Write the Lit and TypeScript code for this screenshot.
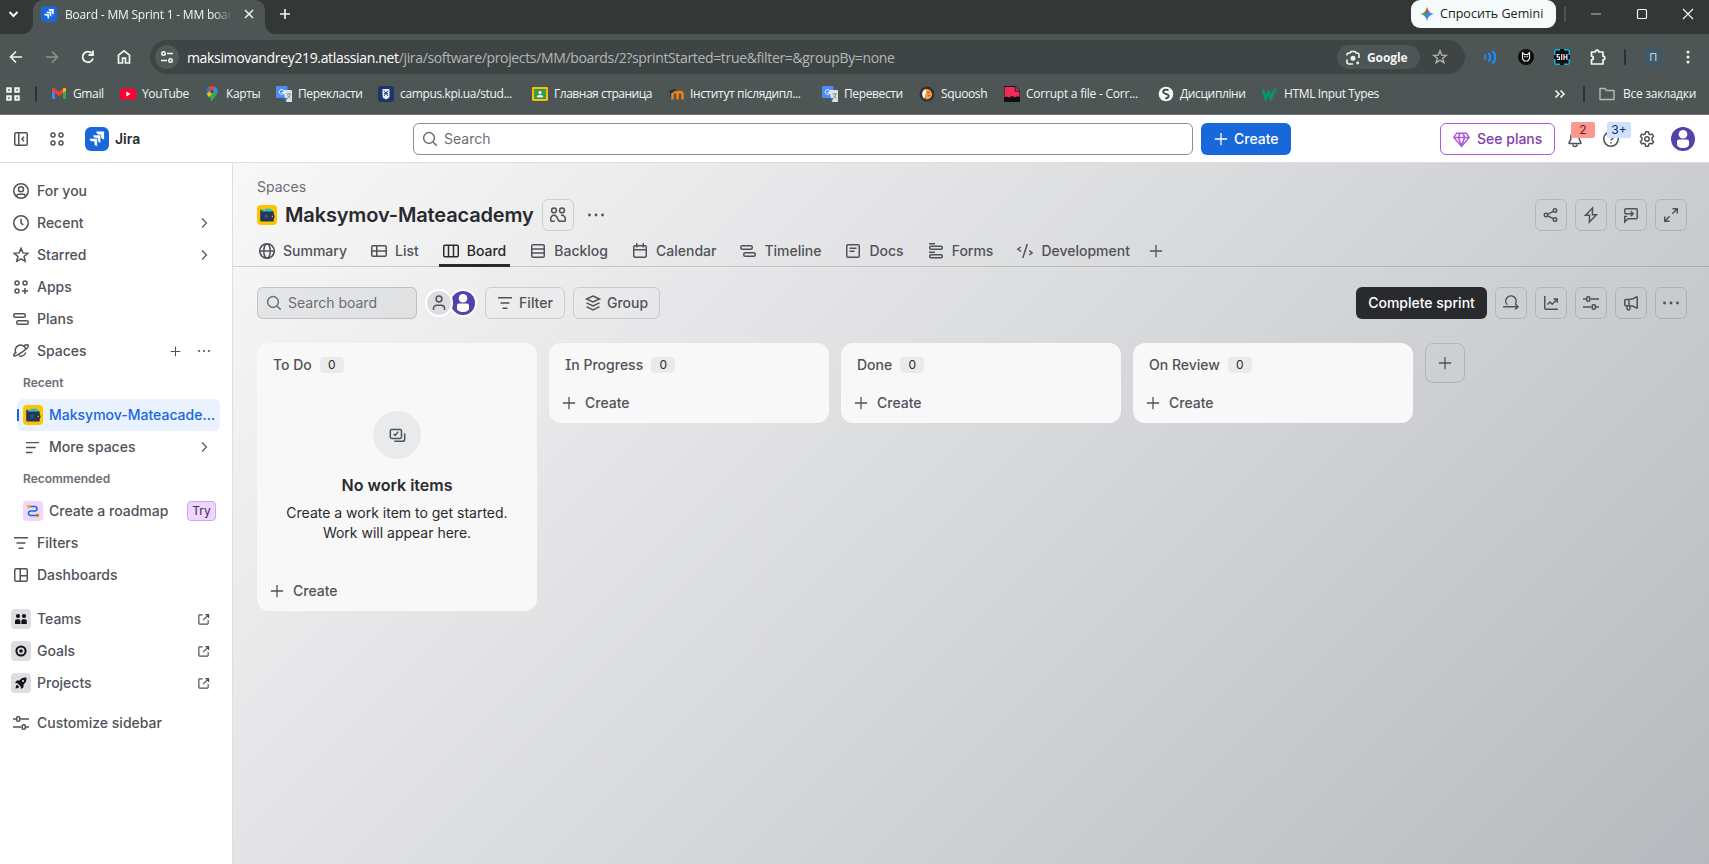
import { LitElement, html, css, svg, nothing } from "lit";
import type { TemplateResult, SVGTemplateResult } from "lit";
import { customElement } from "lit/decorators.js";
import { classMap } from "lit/directives/class-map.js";

/** Line icons on a 16 unit grid, 1.5 unit strokes in the current colour. */
const lines: Record<string, SVGTemplateResult> = {
  panel: svg`<rect x="1.75" y="1.75" width="12.5" height="12.5" rx="1.25"/><path d="M5.75 2v12M11 5.8 9 8l2 2.2"/>`,
  grid: svg`<circle cx="4" cy="4" r="2"/><circle cx="12" cy="4" r="2"/><circle cx="4" cy="12" r="2"/><circle cx="12" cy="12" r="2"/>`,
  search: svg`<circle cx="7" cy="7" r="5.4"/><path d="m11 11 3.8 3.8"/>`,
  plus: svg`<path d="M8 1v14M1 8h14"/>`,
  person: svg`<circle cx="8" cy="8" r="7.25"/><circle cx="8" cy="6.2" r="2.5"/><path d="M3.8 13.6v-.4a2 2 0 0 1 2-2h4.4a2 2 0 0 1 2 2v.4"/>`,
  clock: svg`<circle cx="8" cy="8" r="7.25"/><path d="M8 3.8V8l2.2 1.9"/>`,
  star: svg`<path d="m8 1.4 1.9 4.5 4.9.4-3.7 3.2 1.1 4.8L8 11.8l-4.2 2.5 1.1-4.8L1.2 6.3l4.9-.4z"/>`,
  apps: svg`<circle cx="4" cy="4" r="2"/><circle cx="12" cy="4" r="2"/><circle cx="4" cy="12" r="2"/><path d="M12 9v6M9 12h6"/>`,
  plans: svg`<rect x=".75" y="2.75" width="11.5" height="3.5" rx="1.5"/><rect x="3.75" y="9.75" width="11.5" height="3.5" rx="1.5"/>`,
  planet: svg`<path d="M3 10.3A5.4 5.4 0 1 1 12.8 6M12.7 9.6A5.4 5.4 0 0 1 6 12.9"/><path d="M10.7 2.7c2.3-1 4.1-1.2 4.5-.5.7 1.2-2.1 4.300-6.100 7S1.400 13.700.8 12.700c-.4-.7.7-2.200 2.400-3.800"/>`,
  more: svg`<path d="M1 2.750h14M1 8h10.500M1 13.250h7"/>`,
  filter: svg`<path d="M1 2.750h14M3.500 8h9M5.500 13.250h5"/>`,
  dashboard: svg`<rect x="1.750" y="1.750" width="12.500" height="12.500" rx="1.250"/><path d="M7.250 2v12M7.500 8.750h6.500"/>`,
  external: svg`<path d="M7 2.250H3.250a1 1 0 0 0-1 1v9.500a1 1 0 0 0 1 1h9.500a1 1 0 0 0 1-1V9M10 2h4.250v4.250M14 2.250 7.500 8.750"/>`,
  sliders: svg`<path d="M0 4h3M7.500 4H16M0 12h8.500M13 12h3"/><rect x="3.750" y="1.750" width="3" height="4.500" rx="1"/><rect x="9.250" y="9.750" width="3" height="4.500" rx="1"/>`,
  chevron: svg`<path d="m6 3.500 4.500 4.500L6 12.500" stroke-width="1.200"/>`,
  people: svg`<circle cx="4" cy="3.400" r="2.400"/><circle cx="12" cy="3.400" r="2.400"/><path d="M.75 14.250V11.500A3.250 3.250 0 0 1 4 8.250c2 0 2.900 1.200 3.500 3.200.5 1.800 1.500 2.800 3.300 2.800h3.700a.75.75 0 0 0 .75-.75v-2A3.250 3.250 0 0 0 12 8.250h-1M.75 14.250h4"/>`,
  globe: svg`<circle cx="8" cy="8" r="7.250"/><ellipse cx="8" cy="8" rx="3.200" ry="7.250"/><path d="M.75 8h14.500"/>`,
  list: svg`<rect x=".75" y="2.750" width="14.500" height="10.500" rx="1.250"/><path d="M5.750 3v10M1 8h14"/>`,
  board: svg`<rect x=".75" y="2.250" width="14.500" height="11.500" rx="1.250"/><path d="M5.500 2.500v11M10.500 2.500v11"/>`,
  backlog: svg`<rect x="1.750" y="1.750" width="12.500" height="12.500" rx="1.250"/><path d="M2 6h12M2 10h12"/>`,
  calendar: svg`<rect x="1.750" y="2.750" width="12.500" height="11.500" rx="1.250"/><path d="M2 6.750h12M4.750 0v4.500M11.250 0v4.500"/>`,
  docs: svg`<rect x="1.750" y="1.750" width="12.500" height="12.500" rx="1.250"/><path d="M4.500 5.250h7M4.500 8.250h5"/>`,
  forms: svg`<path d="M1 .75h6M1 9.250h6"/><rect x="1.750" y="3.250" width="12.500" height="3" rx="1.200"/><rect x="1.750" y="11.750" width="12.500" height="3" rx="1.200"/>`,
  code: svg`<path d="M10.300 1 5.800 15M3.800 4 .9 6l3 2.500M12.300 7.500l2.800 2.500-2.900 2"/>`,
  share: svg`<circle cx="3" cy="8" r="1.750"/><circle cx="12" cy="3.500" r="1.750"/><circle cx="12" cy="12.500" r="1.750"/><path d="m4.600 7.200 5.800-2.900M4.600 8.800l5.800 2.900"/>`,
  bolt: svg`<path d="M9.500.9 2.500 8.200h4L6.400 15.100l7-7.300h-4z"/>`,
  feedback: svg`<path d="M1.750 6.500V3a1.250 1.250 0 0 1 1.250-1.250h10A1.250 1.250 0 0 1 14.250 3v7.500a1.250 1.250 0 0 1-1.250 1.250H5L1.750 15V9.500H4M1.750 6.750h8.500M7.700 4.250 10.200 6.750 7.700 9.250"/>`,
  expand: svg`<path d="M9.500 1.750h4.750V6.500M14 2 9.300 6.700M6.500 14.250H1.750V9.500M2 14l4.700-4.700"/>`,
  sprint: svg`<path d="M4.300 9.800A5.200 5.200 0 1 1 12.400 8.800M0 11.750h15M12.200 9l2.800 2.750L12.200 14.500"/>`,
  chart: svg`<path d="M1.750 1v12a1.250 1.250 0 0 0 1.250 1.250h12M4.500 9.500 7 7l2.200 2.200L13.800 4.500M10.500 4h3.750v3.750"/>`,
  megaphone: svg`<path d="M1.750 5.500a1 1 0 0 1 1-1h3.500c2.500 0 5.200-1 7-2.300a.5.500 0 0 1 1 .4v9.800a.5.500 0 0 1-1 .4c-1.800-1.300-4.500-2-7-2H2.750a1 1 0 0 1-1-1zM6 4.500v6M4 11v2.500a1.250 1.250 0 0 0 3 0V11"/>`,
  layers: svg`<path d="m8 1 6.500 3L8 7 1.500 4zM1.500 7.800 8 11l6.500-3.200M1.500 11.600 8 14.800l6.500-3.200"/>`,
  user: svg`<circle cx="8" cy="4" r="2.900"/><path d="M2.500 15v-1.500A3.250 3.250 0 0 1 5.750 10.250h4.500A3.250 3.250 0 0 1 13.500 13.500V15"/>`,
  bell: svg`<path d="M6 13.500a2 2 0 0 0 4 0M8 1.500c-2.500 0-4.200 1.900-4.200 4.300v2.400L2 11.700a.5.500 0 0 0 .4.700h11.200a.5.500 0 0 0 .4-.7l-1.800-3.500V5.800C12.200 3.400 10.500 1.500 8 1.500z"/>`,
  help: svg`<circle cx="8" cy="8" r="7.250"/><path d="M6 6.300a2 2 0 1 1 2.900 1.800c-.6.300-.9.700-.9 1.400M8 11v1.500"/>`,
  gear: svg`<path d="M6.700.8h2.600l.6 2.200 1.300.7 2.100-.6 1.300 2.200L13 7v2l1.600 1.700-1.300 2.200-2.100-.6-1.300.7-.6 2.200H6.700L6.100 13l-1.300-.7-2.100.6-1.300-2.200L3 9V7L1.400 5.300l1.300-2.200 2.100.6L6.100 3z" stroke-linejoin="round"/><circle cx="8" cy="8" r="2.200"/>`,
  gem: svg`<path d="M3.500 2h9L15.200 6 8 14.500.8 6zM1 6h14M5 6l3 8 3-8M5 6l1.700-4M11 6 9.300 2"/>`,
  work: svg`<rect x="1.250" y="2.250" width="10.500" height="8.500" rx="1.250"/><path d="m4.300 6.600 1.400 1.400 2.900-3.500M14.750 6v5.500a2 2 0 0 1-2 2H5"/>`,
};

const icon = (name: string, size = 16, extra = "") => html`<svg class="icon ${extra}" width=${size} height=${size}
  viewBox="0 0 16 16" fill="none" stroke="currentColor" stroke-width=${(1.5 * 16) / Math.max(size, 16)}>${lines[name]}</svg>`;

const dots = (size = 16) => html`<svg class="icon" width=${size} height=${size} viewBox="0 0 16 16" fill="currentColor">
  <circle cx="1.500" cy="8" r="1.400"/><circle cx="8" cy="8" r="1.400"/><circle cx="14.500" cy="8" r="1.400"/></svg>`;

const jiraMark = (size: number) => html`<svg class="icon" width=${size} height=${size} viewBox="0 0 24 24">
  <rect width="24" height="24" rx="6" fill="#1868db"/>
  <g fill="#fff"><path d="M11.300 4.600h7.800v7.800c-1.900 0-3.100-1.300-3.100-3.100V7.700h-1.600c-1.800 0-3.100-1.200-3.100-3.100z"/>
  <path d="M7.900 8.100h7.800v7.800c-1.900 0-3.100-1.300-3.100-3.100v-1.600H11c-1.800 0-3.100-1.200-3.100-3.100z" stroke="#1868db" stroke-width=".5"/>
  <path d="M4.500 11.500h7.800v7.800c-1.900 0-3.100-1.300-3.100-3.100v-1.600H7.600c-1.800 0-3.100-1.200-3.100-3.100z" stroke="#1868db" stroke-width=".5"/></g></svg>`;

const wallet = html`<svg class="icon" width="20" height="20" viewBox="0 0 20 20">
  <rect width="20" height="20" rx="4" fill="#ffc400"/>
  <path d="M4.500 6.500 5.500 4.500l2 .5L9 3.200l1.800 1 1.700-1 1.800 1.500 1.200.3.500 2z" fill="#00b8d9"/><path d="m6 6 2.500-1 2 .8 2.500-1 2 1.200z" fill="#57d9a3"/>
  <path d="M3.200 5.800c0-.8.500-1.200 1.200-1.200L5 6.500h10.800c.6 0 1 .4 1 1v8c0 .6-.4 1-1 1H4.600c-.8 0-1.400-.5-1.400-1.300z" fill="#253858"/>
  <circle cx="9.200" cy="11.500" r="2.100" fill="#2e5187"/><rect x="13.600" y="9.800" width="4" height="3.300" rx="1.500" fill="#172b4d"/><circle cx="15.300" cy="11.400" r=".8" fill="#ffc400"/></svg>`;

const avatar = html`<svg class="icon" width="24" height="24" viewBox="0 0 24 24"><circle cx="12" cy="12" r="12" fill="#5243aa"/>
  <circle cx="12" cy="7.300" r="4.300" fill="#fff"/><path d="M6 14.800c0-1.300.9-2.200 2.200-2.200h7.600c1.300 0 2.200.9 2.200 2.200v3c0 1.700-2.700 3.200-6 3.200s-6-1.500-6-3.200z" fill="#fff"/></svg>`;

const base = css`
  :host, * { box-sizing: border-box; }
  .icon { display: block; flex: none; overflow: visible; }
  .row { display: flex; align-items: center; }
  .grow { flex: 1; }
`;

/* ---------- Browser window frame ---------- */

const translate = svg`<rect width="11.500" height="12" rx="1.200" fill="#4e8df5"/><path d="M7 4h8a1 1 0 0 1 1 1v10.500a.5.500 0 0 1-.5.500H10z" fill="#dfe1e5"/><path d="m7.500 12 2.500 4 1-4z" fill="#3367d6"/>
  <path d="M7.600 4.500A2.400 2.400 0 1 0 8 6.500H5.700" fill="none" stroke="#fff" stroke-width="1"/><path d="M10.500 8h4.500M12.800 7v1M14 8c-.4 2-1.500 3.500-3 4.500M11.700 9.500l2.800 3" stroke="#6b7f8c" stroke-width=".8" fill="none"/>`;

const bookmarks: { label: string; glyph: SVGTemplateResult }[] = [
  { label: "Gmail", glyph: svg`<path d="M1 3.500v9.500h3V7z" fill="#4285f4"/><path d="M12 7v6h3V3.500z" fill="#34a853"/><path d="M1 3.200C1 2 2.500 1.500 3.500 2.300L8 5.800l4.500-3.500c1-.8 2.500-.3 2.500.9v1.600L8 10 1 4.800z" fill="#ea4335"/><path d="m12 2.700.5-.4c1-.8 2.500-.3 2.500.9v1.600L12 7z" fill="#fbbc04"/>` },
  { label: "YouTube", glyph: svg`<rect x="0" y="2.500" width="16" height="11" rx="2.800" fill="#ff0033"/><path d="m6.300 5.500 4.300 2.500-4.300 2.500z" fill="#fff"/>` },
  { label: "Карты", glyph: svg`<path d="M8 0a5.600 5.600 0 0 0-5.600 5.600C2.400 9.700 6.700 11 8 16c1.300-5 5.600-6.300 5.600-10.400A5.600 5.600 0 0 0 8 0z" fill="#34a853"/><path d="M8 0a5.600 5.600 0 0 0-4.300 2L8 5.600 11 .9A5.600 5.600 0 0 0 8 0z" fill="#ea4335"/><path d="m11 .9-4 5.700 3.500 1L13.600 5.600A5.600 5.600 0 0 0 11 .9z" fill="#4285f4"/><path d="M3.700 2a5.600 5.600 0 0 0-.8 6L7.500 5z" fill="#1a73e8"/><path d="m2.900 8 3.600-4L8.700 7.500 4.700 11C4 10 3.300 9 2.900 8z" fill="#fbbc04"/><circle cx="8" cy="5.500" r="2" fill="#4d5654"/>` },
  { label: "Перекласти", glyph: translate },
  { label: "campus.kpi.ua/stud...", glyph: svg`<rect width="16" height="16" rx="3" fill="#1c356b"/><path d="M4.500 3h7v7.500c0 1.500-2 2-3.500 3-1.500-1-3.500-1.500-3.500-3z" fill="#e8ecf4"/><path d="M6 4.500 10 10M10 4.500 6 10M6 7.300h4" stroke="#1c356b" stroke-width=".9"/>` },
  { label: "Главная страница", glyph: svg`<rect y="1" width="16" height="14" rx="1.300" fill="#fbbc04"/><rect x="2" y="3" width="12" height="10" fill="#3a9a52"/><circle cx="8" cy="6.500" r="1.600" fill="#fff"/><path d="M4.800 11.200c0-1.500 1.500-2.200 3.200-2.200s3.200.7 3.200 2.200z" fill="#fff"/>` },
  { label: "Інститут післядипл...", glyph: svg`<path d="M4.500 13.500V8.500a2.500 2.500 0 0 1 5 0v5M9.500 8.500a2.500 2.500 0 0 1 5 0v5" fill="none" stroke="#f98012" stroke-width="2.400"/><path d="M0 5.500 6 3l3 1-5 3-1 .2V11l-1 0V6.200z" fill="#333"/>` },
  { label: "Перевести", glyph: translate },
  { label: "Squoosh", glyph: svg`<circle cx="8" cy="8" r="7.500" fill="#33302f"/><path d="M5 3.500C8 2 12.500 4 13 8s-4 6-7 5C8 11 4.500 10 5 8z" fill="#f8a34a"/><path d="M4.500 4.500C7 3 8 6 6.500 7.500S7.500 11 5 12.500C3 11 2.500 6 4.500 4.500z" fill="#fff"/><path d="M8 6.500h3M8.500 9.500h3" stroke="#e05a1a" stroke-width="1.300"/>` },
  { label: "Corrupt a file - Corr...", glyph: svg`<path d="M0 1a1 1 0 0 1 1-1h10l5 5v11H0z" fill="#111"/><path d="M.5 1h10.300v4.500h4.700V11l-2-.8-2.500 1-3-1.200-3 1.400-2.500-.8-2 .7z" fill="#ec2d5a"/><path d="m11.500 1.200 3.700 3.600h-3.700z" fill="#ec2d5a"/>` },
  { label: "Дисципліни", glyph: svg`<circle cx="8" cy="8" r="7.300" fill="#f5f5f5"/><path d="M10.500 4.300C8 2.800 4.800 4 5.300 6.300c.5 1.800 4.700 1.200 5.300 3.200.5 1.800-1.300 2.800-3.300 2.800" fill="none" stroke="#3a3f3e" stroke-width="1.800"/>` },
  { label: "HTML Input Types", glyph: svg`<path d="m.8 4 3 8.500L6.500 6.500l2.500 6 3.200-8.500" fill="none" stroke="#04996b" stroke-width="2.600"/><path d="M12.500 2.500h2.300l-1.200 1.600c1.800 0 1.500 2.400-.8 2" fill="none" stroke="#04996b" stroke-width=".9"/>` },
];

@customElement("browser-frame")
class BrowserFrame extends LitElement {
  static styles = [base, css`
    :host { display: block; flex: none; background: #4d5654; color: #f3f5f4; font: 12px/16px "Open Sans", "Noto Sans", sans-serif; height: 115px; border-bottom: 1px solid #6e7674; letter-spacing: -0.37px; white-space: nowrap; }
    .strip { height: 34px; background: #333837; display: flex; padding-right: 13px; }
    .menu { width: 33px; padding: 7px 0 0 6px; }
    .tab { width: 232px; background: #4d5654; border-radius: 10px 10px 0 0; padding: 0 8px 7px 8px; gap: 8px; position: relative; }
    .tab::before, .tab::after { content: ""; position: absolute; bottom: 0; width: 10px; height: 10px; }
    .tab::before { left: -10px; background: radial-gradient(circle at 0 0, transparent 9.500px, #4d5654 10px); }
    .tab::after { right: -10px; background: radial-gradient(circle at 100% 0, transparent 9.500px, #4d5654 10px); }
    .name { flex: 1; overflow: hidden; padding-top: 2px; letter-spacing: -0.2px; -webkit-mask-image: linear-gradient(90deg, #000 88%, transparent); mask-image: linear-gradient(90deg, #000 88%, transparent); }
    .new { padding: 7px 0 0 13px; }
    .gemini { width: 145px; height: 28px; border-radius: 9px; background: #f5fbfa; color: #1d2221; gap: 6px; padding: 0 0 1px 9px; font-size: 12.500px; letter-spacing: 0.03px; }
    .sep { width: 2px; height: 16px; background: #2d3332; border-radius: 1px; }
    .strip .sep { background: #4d5654; margin: 6px 22px 0 8px; }
    .wins { gap: 30px; height: 28px; }
    .bar { height: 46px; }
    .nav { width: 150px; padding-left: 8px; gap: 20px; }
    .dim { color: #8c9492; }
    .omni { width: 1315px; height: 34px; border-radius: 17px; background: #3f4545; padding: 0 17px 0 5px; }
    .site { width: 24px; height: 24px; border-radius: 12px; background: #525a58; justify-content: center; margin-right: 8px; }
    .url { font-size: 14px; letter-spacing: -0.345px; color: #b3b8b7; padding-top: 1px; }
    .url b { font-weight: 400; color: #fff; }
    .lens { width: 83px; height: 24px; border-radius: 12px; background: #4d5654; gap: 6px; padding: 1px 0 0 8px; margin-right: 12px; font-weight: 700; letter-spacing: -0.1px; }
    .ext { padding-left: 17px; gap: 20px; }
    .ext .sep { margin: 0 -3px 0 -2px; }
    .who { width: 20px; height: 20px; border-radius: 10px; background: #3f5868; color: #d5e3ee; justify-content: center; font-size: 11px; margin-right: -3px; }
    .marks { height: 34px; margin-top: -3px; }
    .items { display: grid; grid-template-columns: 69px 84px 72px 102px 154px 136px 154px 97px 85px 154px 104px 120px; }
    .marks .apps { width: 35px; padding-left: 6px; }
    .mark { gap: 6px; }
    .mark:nth-child(6) { letter-spacing: -0.47px; }
    .mark:nth-child(10) { letter-spacing: -0.23px; }
    .marks .sep { margin-right: 14px; }
    .all { gap: 8px; padding-right: 13px; letter-spacing: -0.28px; }
    .folder { color: #b4bab8; }
    .over { margin-right: 15px; }
  `];

  render() {
    const ln = (body: SVGTemplateResult, w = 1.600, cls = "") => html`<svg class="icon ${cls}" width="16" height="16" viewBox="0 0 16 16" fill="none" stroke="currentColor" stroke-width=${w}>${body}</svg>`;
    return html`
      <div class="strip">
        <div class="menu">${ln(svg`<path d="m3.500 5 4 4 4-4"/>`, 2)}</div>
        <div class="tab row">${jiraMark(16)}<span class="name">Board - MM Sprint 1 - MM board</span>${ln(svg`<path d="m4 4 8 8M12 4l-8 8"/>`, 1.500)}</div>
        <div class="new">${ln(svg`<path d="M7 2v10M2 7h10"/>`, 1.600)}</div>
        <span class="grow"></span>
        <div class="gemini row"><svg class="icon" width="14" height="14" viewBox="0 0 16 16"><defs><linearGradient id="g" x1="0" y1="0.200" x2="1" y2="0.700"><stop offset="0" stop-color="#fbbc04"/><stop offset=".35" stop-color="#34a853"/><stop offset=".6" stop-color="#4285f4"/><stop offset="1" stop-color="#3186ff"/></linearGradient></defs>
          <path d="M8 0c.8 4.500 3.500 7.200 8 8-4.500.8-7.200 3.500-8 8-.8-4.500-3.500-7.200-8-8 4.500-.8 7.200-3.500 8-8z" fill="url(#g)"/><path d="M8 0c.8 3 1.500 4 3 5.500L7 7 6.300 5C7.300 3.500 7.700 2 8 0z" fill="#ea4335"/></svg>Спросить Gemini</div>
        <span class="sep"></span>
        <div class="wins row">${ln(svg`<path d="M3 8h10"/>`, 1.500, "dim")}${ln(svg`<rect x="3.500" y="3.500" width="9" height="9" rx="1"/>`, 1.200)}${ln(svg`<path d="m3 3 10 10M13 3 3 13"/>`, 1.200)}</div>
      </div>
      <div class="bar row">
        <div class="nav row">
          ${ln(svg`<path d="M14 8H3M8 2.500 2.500 8 8 13.500"/>`)}${ln(svg`<path d="M2 8h11M8 2.500 13.500 8 8 13.500"/>`, 1.600, "dim")}
          ${ln(svg`<path d="M13 9.500A5.300 5.300 0 1 1 12 4.500"/><path d="M13 1.500v4.500H8.500" />`, 1.800)}
          ${ln(svg`<path d="M2.500 14V6.200L8 1.800l5.500 4.400V14h-4V9.200h-3V14z"/>`, 1.700)}
        </div>
        <div class="omni row">
          <div class="site row">${ln(svg`<circle cx="4.500" cy="4.500" r="1.700"/><path d="M8 4.500h6M2 11.500h6"/><circle cx="11.500" cy="11.500" r="1.700"/>`)}</div>
          <span class="url"><b>maksimovandrey219.atlassian.net</b>/jira/software/projects/MM/boards/2?sprintStarted=true&amp;filter=&amp;groupBy=none</span>
          <span class="grow"></span>
          <div class="lens row">${ln(svg`<path d="M2 5.500V5a2 2 0 0 1 2-2h1l1-1.500h4L11 3h1a2 2 0 0 1 2 2v3M2 9.500V12a2 2 0 0 0 2 2h4"/><circle cx="8" cy="8.300" r="1.700" fill="currentColor"/><circle cx="12.700" cy="13" r=".6" fill="currentColor"/>`)}Google</div>
          ${ln(svg`<path d="m8 1.800 1.700 4.300 4.600.3-3.600 2.900 1.200 4.500L8 11.300l-3.900 2.500 1.200-4.500L1.700 6.400l4.600-.3z"/>`, 1.300, "folder")}
        </div>
        <div class="ext row">
          <svg class="icon" width="16" height="16" viewBox="0 0 16 16" fill="none" stroke="#1a8cff" stroke-width="2.100"><path d="M2.500 6q1.600 2 0 4.500M6.500 4q3.500 4 0 8.500M10.500 2q5.500 6 0 12.500"/></svg>
          <svg class="icon" width="16" height="16" viewBox="0 0 16 16"><circle cx="8" cy="8" r="8" fill="#0b0b0b"/><path d="M4.500 3.800 6.500 5.500h3l2-1.700v6L9.700 12H6.300L4.500 9.800z" fill="none" stroke="#eee" stroke-width="1.200"/><path d="M6.200 7.500h1.300M8.500 7.500h1.300" stroke="#eee" stroke-width="1.300"/></svg>
          <svg class="icon" width="16" height="16" viewBox="0 0 16 16"><rect width="16" height="16" rx="2" fill="#0b0f12"/><path d="M.75 6V2A1.250 1.250 0 0 1 2 .75h4M10 .75h4A1.250 1.250 0 0 1 15.250 2v4M15.250 10v4A1.250 1.250 0 0 1 14 15.250h-4M6 15.250H2A1.250 1.250 0 0 1 .75 14v-4" fill="none" stroke="#14b4dc" stroke-width="1.500"/><path d="M5.500 5.500H3.200V8h2.300v2.500H3M7.700 5v6M10 11V5M10 8h2.700M12.900 5v6" stroke="#fff" stroke-width="1.100" fill="none"/></svg>
          ${ln(svg`<path d="M1.500 3h3.700a1.800 1.800 0 0 1 3.600 0h4.200v4.200a1.800 1.800 0 0 1 0 3.600V15H1.500v-4.200a1.800 1.800 0 0 0 0-3.600z" stroke-linejoin="round"/>`, 1.700)}
          <span class="sep"></span><div class="who row">П</div>
          <svg class="icon" width="16" height="16" viewBox="0 0 16 16" fill="currentColor"><circle cx="8" cy="3" r="1.500"/><circle cx="8" cy="8" r="1.500"/><circle cx="8" cy="13" r="1.500"/></svg>
        </div>
      </div>
      <div class="marks row">
        <div class="apps">${ln(svg`<path d="M1.200 2.200h3.600v3.600H1.200zM9.200 2.200h3.600v3.600H9.200zM1.200 10.200h3.600v3.600H1.200zM9.200 10.200h3.600v3.600H9.200z"/>`, 1.900)}</div>
        <span class="sep"></span>
        <div class="items">${bookmarks.map((b) => html`<div class="mark row"><svg class="icon" width="16" height="16" viewBox="0 0 16 16">${b.glyph}</svg>${b.label}</div>`)}</div>
        <span class="grow"></span>
        <div class="over">${ln(svg`<path d="m3.500 4.500 3.500 3.500-3.500 3.500M8.500 4.500 12 8l-3.500 3.500"/>`)}</div>
        <span class="sep"></span>
        <div class="all row">${ln(svg`<path d="M1 13.500v-11h5l1.500 2H15v9z" stroke-linejoin="round"/>`, 1.400, "folder")}Все закладки</div>
      </div>`;
  }
}

/* ---------- Product top bar ---------- */

@customElement("top-bar")
class TopBar extends LitElement {
  static styles = [base, css`
    :host { display: flex; flex: none; align-items: center; height: 48px; background: #fff; border-bottom: 1px solid #dddee1; color: #505258; font: 500 14px/20px Inter, sans-serif; padding: 1px 14px 0 13px; }
    .switch { margin: 0 20px; }
    .brand { gap: 6px; color: #292a2e; font-weight: 600; width: 328px; }
    .search { width: 780px; height: 32px; border: 1px solid #8c8f97; border-radius: 6px; padding: 0 8px; gap: 6px; font-weight: 400; color: #6b6e76; margin-right: 8px; }
    .create { width: 90px; height: 32px; border-radius: 6px; background: #1868db; color: #fff; gap: 6px; padding-left: 13px; }
    .plans { width: 115px; height: 32px; border: 1px solid #af59e0; border-radius: 6px; color: #803fa5; gap: 7px; padding-left: 12px; margin-right: 12px; }
    .plans .icon { color: #af59e0; }
    .note { position: relative; margin-right: 20px; }
    .tag { position: absolute; left: 4px; top: -9px; width: 24px; height: 16px; border-radius: 2px; font: 12px/16px Inter, sans-serif; text-align: center; }
    .red { background: #fd9891; color: #5d1f1a; }
    .blue { background: #cfe1fd; color: #123263; }
    .gear { margin-right: 16px; }
  `];
  render() {
    return html`${icon("panel")}${icon("grid", 16, "switch")}
      <div class="brand row">${jiraMark(24)}Jira</div>
      <div class="search row">${icon("search")}Search</div>
      <div class="create row">${icon("plus", 14)}Create</div>
      <span class="grow"></span>
      <div class="plans row">${icon("gem", 17)}See plans</div>
      <div class="note">${icon("bell")}<span class="tag red">2</span></div>
      <div class="note">${icon("help")}<span class="tag blue">3+</span></div>
      ${icon("gear", 16, "gear")}${avatar}`;
  }
}

/* ---------- Navigation sidebar ---------- */

@customElement("side-nav")
class SideNav extends LitElement {
  static styles = [base, css`
    :host { display: block; flex: none; width: 233px; background: #fff; border-right: 1px solid #dddee1; padding: 12px 12px 0; color: #505258; font: 500 14px/20px Inter, sans-serif; white-space: nowrap; }
    .link { height: 32px; gap: 8px; padding: 0 8px 0 1px; }
    .link > .label { flex: 1; }
    .acts { gap: 17px; margin-right: 2px; }
    .nested { margin-left: 5px; padding-left: 6px; gap: 6px; }
    .nested.menu { padding-left: 8px; gap: 9px; }
    .heading { height: 32px; padding-left: 11px; font: 600 12px/32px Inter, sans-serif; color: #6b6e76; }
    .current { background: #e9f2fe linear-gradient(#1868db, #1868db) 0 50% / 2px 12px no-repeat; color: #1868db; border-radius: 6px; padding-right: 4px; }
    .try { height: 20px; width: 29px; border: 1px solid #d8a0f7; background: #eed7fc; color: #48245d; border-radius: 4px; font: 12px/18px Inter, sans-serif; text-align: center; margin-right: -4px; }
    .tile { width: 20px; height: 20px; border-radius: 4px; background: #dddee1; margin: 0 -2px; }
    .out { margin-right: 2px; }
    .gap { height: 12px; }
    .small { height: 8px; }
  `];

  link(ic: TemplateResult, label: string, tail: unknown = nothing, cls: Record<string, boolean> = {}) {
    return html`<div class=${classMap({ link: true, row: true, ...cls })}>${ic}<span class="label">${label}</span>${tail}</div>`;
  }

  tile(glyph: SVGTemplateResult) {
    return html`<svg class="tile icon" viewBox="0 0 20 20" fill="#111213">${glyph}</svg>`;
  }

  render() {
    const next = icon("chevron", 16);
    const out = icon("external", 13, "out");
    return html`
      ${this.link(icon("person"), "For you")}
      ${this.link(icon("clock"), "Recent", next)}
      ${this.link(icon("star"), "Starred", next)}
      ${this.link(icon("apps"), "Apps")}
      ${this.link(icon("plans"), "Plans")}
      ${this.link(icon("planet"), "Spaces", html`<span class="acts row">${icon("plus", 11)}${dots(12)}</span>`)}
      <div class="heading">Recent</div>
      ${this.link(wallet, "Maksymov-Mateacade...", nothing, { nested: true, current: true })}
      ${this.link(icon("more", 15), "More spaces", next, { nested: true, menu: true })}
      <div class="heading">Recommended</div>
      ${this.link(html`<svg class="icon" width="20" height="20" viewBox="0 0 20 20"><rect width="20" height="20" rx="4" fill="#eed7fc"/><path d="M7 5.500h4.800a2.200 2.200 0 0 1 0 4.400H7.700a2.200 2.200 0 0 0 0 4.500h5.800" fill="none" stroke="#1868db" stroke-width="1.500"/><circle cx="5.800" cy="5.600" r="1.800" fill="#ffab00"/><rect x="12.800" y="12.800" width="3.300" height="3.300" rx=".5" fill="#ffab00"/><path d="m13.500 13.800 1.500 1" stroke="#253858" stroke-width="1.200"/></svg>`, "Create a roadmap", html`<span class="try">Try</span>`, { nested: true })}
      ${this.link(icon("filter", 16), "Filters")}
      ${this.link(icon("dashboard"), "Dashboards")}
      <div class="gap"></div>
      ${this.link(this.tile(svg`<circle cx="7" cy="7" r="2.100"/><circle cx="13" cy="7" r="2.100"/><path d="M4 15v-2.500A2 2 0 0 1 6 10.300h1.500A2 2 0 0 1 9.400 12.500V15zM10.300 15v-2.500a2 2 0 0 1 2-2.200h1.500a2 2 0 0 1 2 2.200V15z"/>`), "Teams", out)}
      ${this.link(this.tile(svg`<circle cx="10" cy="10" r="4.600" fill="none" stroke="#111213" stroke-width="2"/><circle cx="10" cy="10" r="1.800"/>`), "Goals", out)}
      ${this.link(this.tile(svg`<path d="M15.500 4.500c-3.500-.3-5.500 1-7 3H5.800L4 10l2.500.3 3.200 3.200L10 16l2.500-1.800v-2.700c2-1.500 3.300-3.500 3-7zM4.500 15.500l.5-2.800 1.200-1 2 2-1 1.300z"/><circle cx="12" cy="8" r="1.100" fill="#dddee1"/>`), "Projects", out)}
      <div class="small"></div>
      ${this.link(icon("sliders"), "Customize sidebar")}`;
  }
}

/* ---------- Board page ---------- */

const views: [string, string][] = [
  ["globe", "Summary"], ["list", "List"], ["board", "Board"], ["backlog", "Backlog"], ["calendar", "Calendar"],
  ["plans", "Timeline"], ["docs", "Docs"], ["forms", "Forms"], ["code", "Development"],
];

@customElement("board-page")
class BoardPage extends LitElement {
  static styles = [base, css`
    :host { display: block; flex: 1; color: #505258; font: 500 14px/20px Inter, sans-serif; background: linear-gradient(135deg, #f8f8f8 0%, #b7b9be 100%); white-space: nowrap; }
    .crumb { padding: 14px 24px 0; font-weight: 400; color: #6b6e76; }
    .head { height: 32px; margin-top: 2px; padding: 0 22px 0 24px; gap: 8px; }
    h1 { margin: 0; font: 600 20px/24px Inter, sans-serif; letter-spacing: -0.14px; color: #292a2e; }
    .btn { height: 32px; min-width: 32px; border: 1px solid rgba(11, 18, 14, 0.14); border-radius: 6px; justify-content: center; gap: 6px; }
    .more { margin-left: 6px; }
    .tabs { height: 36px; padding: 0 22px; gap: 16px; border-bottom: 1px solid rgba(11, 18, 14, 0.16); }
    .tab { height: 36px; padding: 7px 4px 0; gap: 8px; border-bottom: 3px solid transparent; }
    .tab.on { color: #292a2e; border-color: #292a2e; }
    .tab.new { margin-left: -5px; }
    .tools { padding: 20px 22px 0 24px; gap: 8px; }
    .find { width: 160px; height: 32px; border: 1px solid rgba(11, 18, 14, 0.16); border-radius: 6px; background: rgba(5, 21, 36, 0.06); padding: 0 8px; gap: 6px; font-weight: 400; color: #6b6e76; }
    .face { width: 28px; height: 28px; border-radius: 14px; border: 2px solid #fff; background: #dddee1; justify-content: center; }
    .face + .face { margin-left: -4px; }
    .face:first-child { z-index: 1; position: relative; }
    .filter { width: 80px; }
    .group { width: 87px; }
    .done { height: 32px; width: 131px; border-radius: 6px; background: #292a2e; color: #fff; justify-content: center; }
    .cols { display: flex; align-items: flex-start; gap: 12px; padding: 24px; }
    .col { width: 280px; background: #f8f8f8; border-radius: 12px; padding: 12px 12px 10px; }
    .title { height: 20px; gap: 8px; padding: 0 4px; font-feature-settings: "cv08"; }
    .count { width: 24px; height: 16px; border-radius: 4px; background: #e9eaec; font: 400 12px/16px Inter, sans-serif; text-align: center; color: #292a2e; }
    .add { height: 20px; gap: 9px; margin-top: 18px; padding-left: 1px; }
    .none { display: flex; flex-direction: column; align-items: center; padding: 36px 0 0; }
    .none + .add { margin-top: 38px; }
    .disc { width: 48px; height: 48px; border-radius: 24px; background: #e9eaec; justify-content: center; }
    h2 { margin: 16px 0 8px; font: 600 16px/20px Inter, sans-serif; color: #292a2e; }
    p { margin: 0; font-weight: 400; color: #292a2e; text-align: center; }
    .newcol { width: 40px; height: 40px; border-radius: 8px; }
  `];

  column(name: string, empty = false) {
    return html`<section class="col">
      <div class="title row">${name}<span class="count">0</span></div>
      ${empty ? html`<div class="none"><div class="disc row">${icon("work", 17)}</div><h2>No work items</h2><p>Create a work item to get started.<br>Work will appear here.</p></div>` : nothing}
      <div class="add row">${icon("plus", 14)}Create</div>
    </section>`;
  }

  render() {
    const tool = (n: string) => html`<div class="btn row">${icon(n)}</div>`;
    return html`
      <div class="crumb">Spaces</div>
      <div class="head row">${wallet}<h1>Maksymov-Mateacademy</h1>${tool("people")}<span class="more">${dots()}</span>
        <span class="grow"></span>${["share", "bolt", "feedback", "expand"].map(tool)}</div>
      <nav class="tabs row">${views.map(([ic, label]) => html`<div class=${classMap({ tab: true, row: true, on: label === "Board" })}>${icon(ic)}${label}</div>`)}
        <div class="tab row new">${icon("plus", 14)}</div></nav>
      <div class="tools row">
        <div class="find row">${icon("search")}Search board</div>
        <div class="faces row"><div class="face row">${icon("user")}</div><div class="face row">${avatar}</div></div>
        <div class="btn row filter">${icon("filter")}Filter</div>
        <div class="btn row group">${icon("layers")}Group</div>
        <span class="grow"></span>
        <div class="done row">Complete sprint</div>
        ${["sprint", "chart", "sliders", "megaphone"].map(tool)}<div class="btn row">${dots()}</div>
      </div>
      <div class="cols">${this.column("To Do", true)}${this.column("In Progress")}${this.column("Done")}${this.column("On Review")}
        <div class="btn row newcol">${icon("plus", 14)}</div></div>`;
  }
}

@customElement("app-root")
class AppRoot extends LitElement {
  static styles = css`
    :host { display: flex; flex-direction: column; width: 100%; height: 100vh; overflow: hidden; }
    .body { flex: 1; display: flex; min-height: 0; }
  `;
  render() {
    return html`<browser-frame></browser-frame><top-bar></top-bar><div class="body"><side-nav></side-nav><board-page></board-page></div>`;
  }
}
